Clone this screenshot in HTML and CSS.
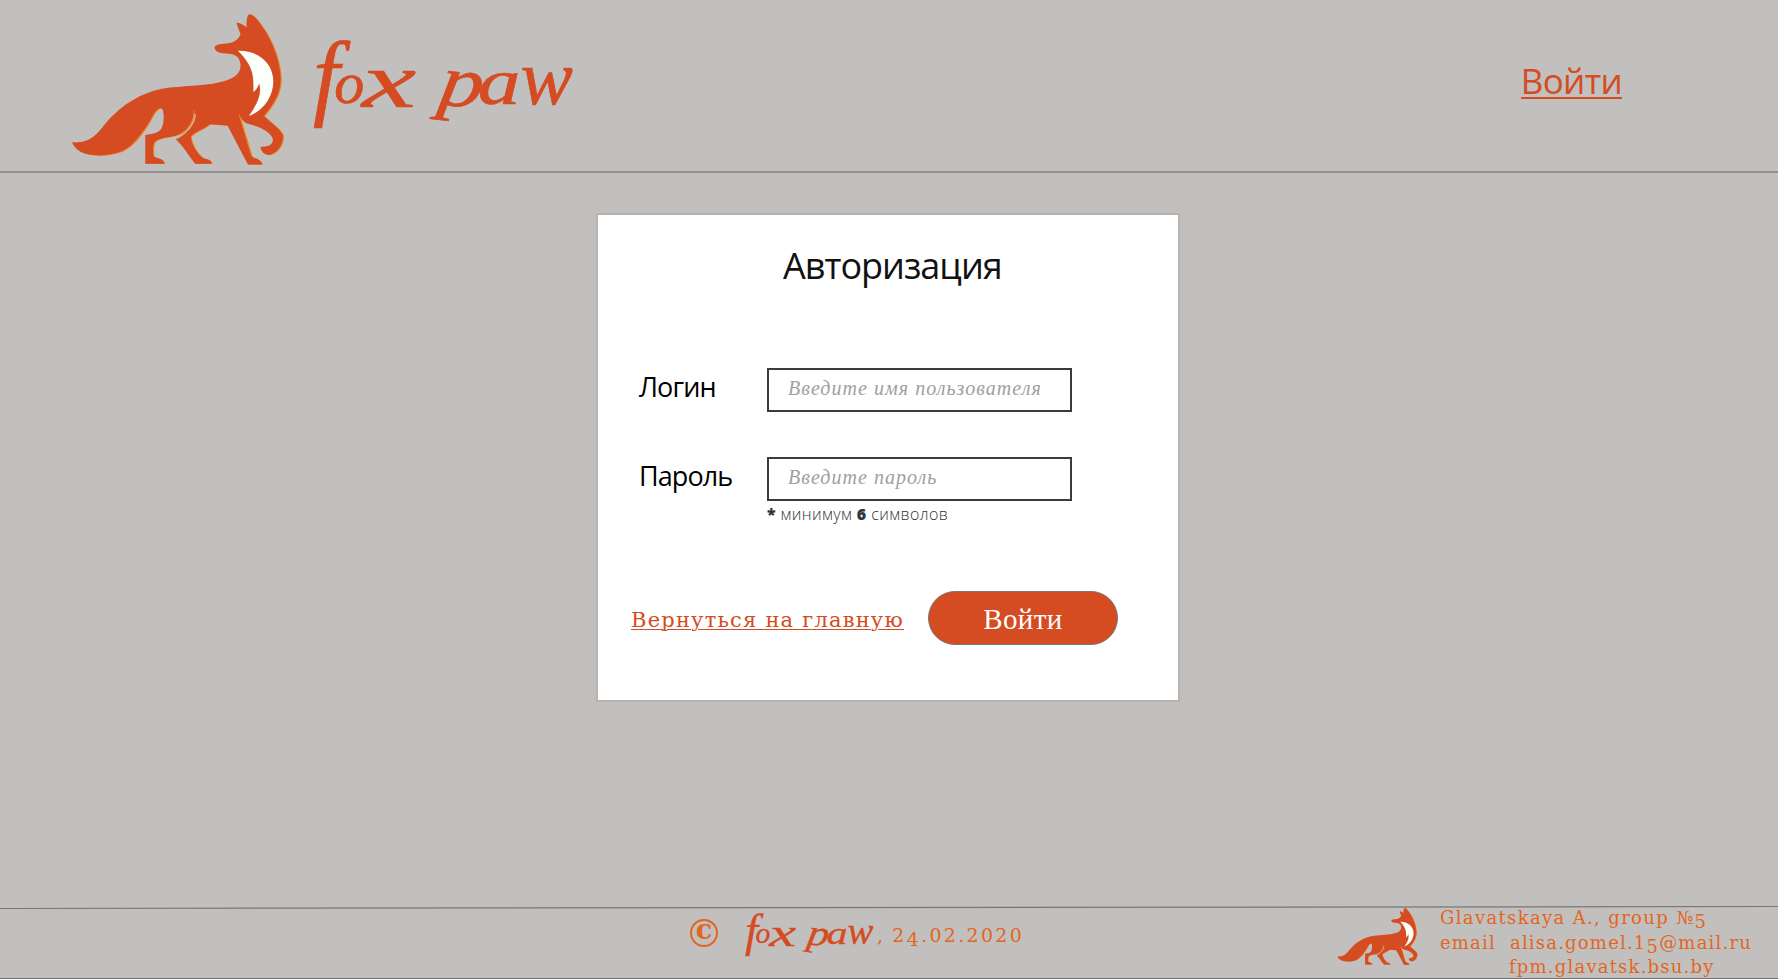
FILE: index.html
```html
<!DOCTYPE html>
<html lang="ru">
<head>
<meta charset="utf-8">
<title>Fox paw</title>
<link rel="stylesheet" href="styles.css">
</head>
<body>
<svg class="defs" aria-hidden="true">
  <defs>
    <path id="body" d="M36 427C66 429 89 422 109 402C128 384 140 363 162 343C205 302 262 270 330 263C390 257 450 256 490 244C530 233 540 215 540 198C540 176 528 164 509 162C492 160 475 161 468 154C463 149 461 144 464 139C478 130 501 134 517 128C529 122 537 113 540 104C536 92 530 80 528 69C540 71 550 77 558 84C558 68 558 48 566 44C578 44 590 60 605 81C638 128 660 190 660 240C659 290 630 322 610 348C630 369 657 383 666 405C669 430 654 454 630 464C612 466 600 454 600 440C615 441 631 438 635 427C640 416 634 409 624 399C606 382 579 376 557 370C547 365 540 352 535 343L572 467C578 478 600 473 604 493L562 493L501 377L448 373C434 386 400 397 391 410C392 431 410 461 428 474C440 479 452 477 453 491L404 491C384 466 370 440 346 417C374 400 401 380 404 345C400 325 402 370 370 395C342 416 300 407 282 427C276 440 279 456 279 468C291 477 309 473 312 491L255 491L255 405C280 402 299 400 306 380C312 362 312 331 304 325C286 322 275 354 262 374C241 406 217 439 185 454C150 468 112 468 84 463C58 458 43 443 36 427Z"/>
    <g id="fox">
      <use href="#body" x="3.5" y="1" fill="#ef8420"/>
      <use href="#body" fill="#d54b22"/>
      <path fill="none" stroke="#ef8420" stroke-width="3" d="M401 332C402 362 388 388 362 400M536 344L572 462"/>
      <path fill="none" stroke="#c2c0be" stroke-width="3" d="M405 342C403 374 380 398 350 416"/>
      <path fill="#fcfffa" d="M532 153C592 151 638 190 638 244C638 292 606 334 565 348C588 315 605 285 596 251C593 260 588 268 579 277C578 235 584 204 532 153Z"/>
    </g>
    <g id="wordmark">
      <text class="script" y="245"><tspan x="68" y="262" font-size="285">f</tspan><tspan x="132" y="246" font-size="180">o</tspan><tspan x="215" y="260" font-size="235" textLength="162" lengthAdjust="spacingAndGlyphs">x</tspan><tspan x="330" font-size="170"> </tspan><tspan x="440" y="250" font-size="220" rotate="8" textLength="130" lengthAdjust="spacingAndGlyphs">p</tspan><tspan x="562" y="250" font-size="195" textLength="128" lengthAdjust="spacingAndGlyphs">a</tspan><tspan x="690" y="250" font-size="235">w</tspan></text>
    </g>
  </defs>
</svg>
<header class="header">
  <a class="brand">
    <svg class="fox" viewBox="36 44 634 450"><use href="#fox"/></svg>
    <svg class="word" viewBox="50 50 800 320"><use href="#wordmark"/></svg>
  </a>
  <a class="login">Войти</a>
</header>
<main class="main">
  <form class="card">
    <h1 class="title">Авторизация</h1>
    <div class="row">
      <label class="label" for="login">Логин</label>
      <input class="input" id="login" placeholder="Введите имя пользователя">
    </div>
    <div class="row">
      <label class="label" for="pass">Пароль</label>
      <input class="input" id="pass" placeholder="Введите пароль">
    </div>
    <p class="note"><b>*</b> минимум <b>6</b> символов</p>
    <div class="actions">
      <a class="back">Вернуться на главную</a>
      <button class="submit" type="button">Войти</button>
    </div>
  </form>
</main>
<footer class="footer">
  <svg class="rule" viewBox="0 0 1778 4" preserveAspectRatio="none"><path d="M0 2.5L1778 .5"/></svg>
  <div class="copy">
    <span class="mark">c</span>
    <svg class="word-small" viewBox="50 50 800 320"><use href="#wordmark"/></svg>
    <span class="date"><span class="comma">,</span>2<span class="low">4</span>.02.2020</span>
  </div>
  <div class="contact">
    <svg class="fox-small" viewBox="36 44 634 450"><use href="#fox"/></svg>
    <div class="lines">
      <span class="author">Glavatskaya A., group №<span class="low">5</span></span>
      <span class="mail"><span>email</span><span>alisa.gomel.1<span class="low">5</span>@mail.ru</span></span>
      <span class="site">fpm.glavatsk.bsu.by</span>
    </div>
  </div>
</footer>
</body>
</html>
```

FILE: styles.css
```css
* { box-sizing: border-box; }
body {
  margin: 0;
  height: 979px;
  display: flex;
  flex-direction: column;
  overflow: hidden;
  background: #c2c0be;
  font-family: "Open Sans", "Noto Sans", sans-serif;
}
.defs { position: absolute; width: 0; height: 0; }
.script { font-family: "Liberation Serif", serif; font-style: italic; fill: #d54b22; stroke: #d54b22; stroke-width: 2; }
.header {
  height: 173px;
  padding: 14px 156px 0 72px;
  display: flex;
  justify-content: space-between;
  border-bottom: 2px solid #91908f;
}
.brand { display: flex; gap: 23px; }
.fox { width: 212px; height: 151px; }
.word { width: 267px; height: 107px; margin-top: 23px; }
.login {
  height: 85px;
  padding-top: 49px;
  font-size: 35px;
  line-height: 36px;
  color: #d54b22;
  border-bottom: 2px solid #d54b22;
  padding-left: 0;
  letter-spacing: -.7px;
}
.main { flex: 1; padding-top: 40px; }
.card {
  width: 584px;
  height: 489px;
  margin: 0 0 0 596px;
  padding: 32px 60px 0 33px;
  border: 2px solid #b9b3ae;
  background: #fff;
}
.title { margin: 0 0 83px 152px; font-weight: 400; font-size: 36px; line-height: 38px; letter-spacing: -1px; color: #111; }
.row { display: flex; height: 44px; margin-bottom: 45px; padding-left: 8px; }
.label { width: 128px; font-size: 27px; line-height: 38px; letter-spacing: -.9px; white-space: nowrap; }
.input {
  width: 305px;
  height: 44px;
  padding: 0 0 3px 19px;
  border: 2px solid #3b3b3b;
  background: #fff;
  font: italic 20px "Liberation Serif", serif;
}
.input::placeholder { color: #a0a0a0; opacity: 1; letter-spacing: 1.03px; }
.note { margin: -43px 0 0 136px; font-size: 16px; line-height: 22px; letter-spacing: .42px; font-weight: 300; color: #333; }
.note b { font-weight: 800; }
.actions { display: flex; justify-content: space-between; margin-top: 66px; }
.back {
  padding-top: 13px;
  font: 21px/32px "DejaVu Serif", serif;
  letter-spacing: 1.2px;
  white-space: nowrap;
  color: #d54b22;
  text-decoration: underline;
  text-decoration-thickness: 1px;
  text-underline-offset: 2px;
}
.submit {
  width: 190px;
  height: 54px;
  border: 1px solid #777;
  border-radius: 27px;
  background: #d54b22;
  color: #fff;
  font: 29px "Liberation Serif", serif;
  letter-spacing: .4px;
  padding: 3px 0 0;
}
.footer {
  position: relative;
  height: 73px;
  display: flex;
  justify-content: space-between;
  padding: 0 28px 0 690px;
  border-bottom: 1px solid #707070;
  color: #e2661e;
  font: 18px/24.5px "DejaVu Serif", serif;
}
.rule { position: absolute; left: 0; top: 0; width: 100%; height: 4px; }
.rule path { stroke: #777; stroke-width: 1.2; fill: none; }
.copy { display: flex; }
.mark {
  width: 28px;
  height: 28px;
  margin: 13px 25px 0 0;
  border: 2px solid;
  border-radius: 50%;
  text-align: center;
  font: bold 27px/18px "DejaVu Serif", serif;
}
.word-small { width: 132px; height: 53px; margin-top: 5px; margin-left: -1px; }
.date { margin: 17px 0 0 3px; font-size: 19px; letter-spacing: 2.3px; }
.comma { margin-right: 7px; }
.low { position: relative; top: 4px; }
.contact { display: flex; }
.fox-small { width: 81px; height: 57px; margin-top: 2px; }
.lines { display: flex; flex-direction: column; margin-left: 22px; width: 310px; letter-spacing: 1.2px; white-space: nowrap; }
.author { letter-spacing: 1.35px; }
.mail { display: flex; gap: 14px; }
.site { padding-left: 69px; }
```
